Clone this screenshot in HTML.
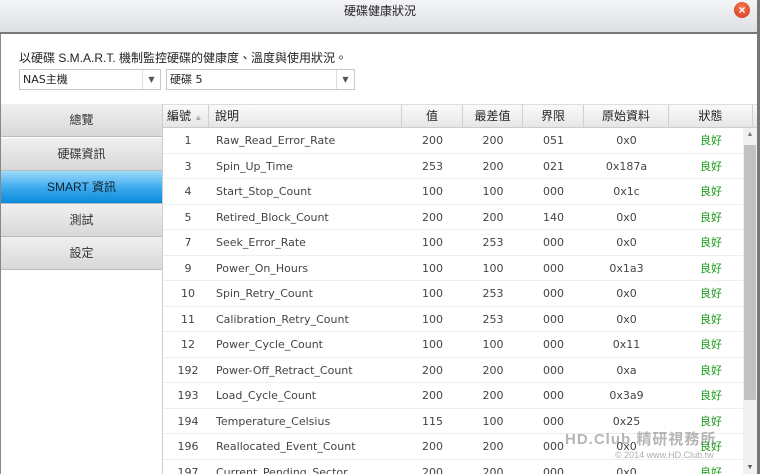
<!DOCTYPE html>
<html style="width:760px;height:474px;overflow:hidden"><head><meta charset="utf-8"><style>
*{margin:0;padding:0;box-sizing:border-box}
body{width:760px;height:474px;overflow:hidden;background:#fff;font-family:"Liberation Sans","Noto Sans CJK TC",sans-serif;font-size:12px;color:#333;position:relative}
.abs{position:absolute}
#title{left:0;top:0;width:760px;height:34px;background:linear-gradient(#f4f5f7,#dcdfe4);border-bottom:2px solid #777;text-align:center;line-height:22px;font-size:12px;color:#222}
#close{left:734px;top:2px;width:16px;height:16px;border-radius:50%;background:radial-gradient(circle at 50% 35%,#f47a50,#d6371d);color:#fff;font-size:12px;font-weight:bold;line-height:16px;text-align:center}
#rborder{left:757px;top:0;width:3px;height:474px;background:#777}
#lborder{left:0;top:34px;width:1px;height:440px;background:#888}
.sel{height:21px;border:1px solid #c8c8c8;background:#fff;font-family:"DejaVu Sans","Noto Sans CJK TC",sans-serif;font-size:11px;line-height:19px;padding-left:3px;color:#222}
.sel .arr{position:absolute;right:0;top:0;width:18px;height:19px;border-left:1px solid #ddd;text-align:center;font-size:8px;color:#555}
.tab{left:1px;width:161px;height:33px;background:linear-gradient(#f0f0f0,#d8d8d8);border-bottom:1px solid #bbb;text-align:center;line-height:33px;color:#333}
.tab.on{background:linear-gradient(#9edbfb,#38a8ec 55%,#0b8ad9);color:#123}
#hdr{left:163px;top:104px;width:594px;height:24px;background:linear-gradient(#fafafa,#e6e6e6);border-bottom:1px solid #ccc;border-top:1px solid #ddd}
.hc{top:0;height:23px;line-height:23px;text-align:center;border-right:1px solid #d0d0d0;color:#222}
.row{left:163px;width:580px;height:25.5px;border-bottom:1px solid #eee;font-family:"DejaVu Sans","Noto Sans CJK TC",sans-serif;font-size:11px;color:#444}
.row span{position:absolute;top:0;line-height:25px;text-align:center}
#vl{left:162px;top:104px;width:1px;height:370px;background:#ccc}
#sb{left:743px;top:128px;width:14px;height:346px;background:#f0f0f0}
#thumb{left:744px;top:145px;width:12px;height:255px;background:#c1c1c1;border-radius:1px}
</style></head><body>
<div id="title" class="abs">硬碟健康狀況</div>
<div id="close" class="abs">×</div>
<div id="lborder" class="abs"></div>
<div class="abs" style="left:19px;top:49px;font-size:12px;color:#222">以硬碟 S.M.A.R.T. 機制監控硬碟的健康度、溫度與使用狀況。</div>
<div class="abs sel" style="left:19px;top:69px;width:142px">NAS主機<span class="arr">▼</span></div>
<div class="abs sel" style="left:166px;top:69px;width:189px">硬碟 5<span class="arr">▼</span></div>
<div class="abs tab" style="top:104px">總覽</div>
<div class="abs tab" style="top:138px">硬碟資訊</div>
<div class="abs tab on" style="top:171px">SMART 資訊</div>
<div class="abs tab" style="top:204px">測試</div>
<div class="abs tab" style="top:237px">設定</div>
<div id="vl" class="abs"></div>
<div id="hdr" class="abs">
<div class="abs hc" style="left:0;width:46px;text-align:left;padding-left:4px">編號 <span style="font-size:8px;color:#aaa">▲</span></div>
<div class="abs hc" style="left:46px;width:193px;text-align:left;padding-left:6px">說明</div>
<div class="abs hc" style="left:239px;width:61px">值</div>
<div class="abs hc" style="left:300px;width:60px">最差值</div>
<div class="abs hc" style="left:360px;width:61px">界限</div>
<div class="abs hc" style="left:421px;width:85px">原始資料</div>
<div class="abs hc" style="left:506px;width:84px">狀態</div>
</div>
<div id="rows"></div>
<div id="sb" class="abs"><div style="text-align:center;font-size:7px;color:#777;margin-top:3px">▲</div><div style="position:absolute;bottom:3px;width:14px;text-align:center;font-size:7px;color:#555">▼</div></div>
<div id="thumb" class="abs"></div>
<div id="rborder" class="abs"></div>
<div class="abs" style="left:565px;top:428px;font-size:15px;color:rgba(120,120,120,.55);font-weight:bold;letter-spacing:1px">HD.Club 精研視務所</div>
<div class="abs" style="left:615px;top:450px;font-size:9px;color:rgba(120,120,120,.6)">© 2014 www.HD.Club.tw</div>
<script>
var d=[[1,"Raw_Read_Error_Rate",200,200,"051","0x0"],[3,"Spin_Up_Time",253,200,"021","0x187a"],[4,"Start_Stop_Count",100,100,"000","0x1c"],[5,"Retired_Block_Count",200,200,140,"0x0"],[7,"Seek_Error_Rate",100,253,"000","0x0"],[9,"Power_On_Hours",100,100,"000","0x1a3"],[10,"Spin_Retry_Count",100,253,"000","0x0"],[11,"Calibration_Retry_Count",100,253,"000","0x0"],[12,"Power_Cycle_Count",100,100,"000","0x11"],[192,"Power-Off_Retract_Count",200,200,"000","0xa"],[193,"Load_Cycle_Count",200,200,"000","0x3a9"],[194,"Temperature_Celsius",115,100,"000","0x25"],[196,"Reallocated_Event_Count",200,200,"000","0x0"],[197,"Current_Pending_Sector",200,200,"000","0x0"]];
var h="";d.forEach(function(r,i){var t=128+i*25.5;h+='<div class="abs row" style="top:'+t+'px"><span style="left:0;width:50px">'+r[0]+'</span><span style="left:53px;text-align:left">'+r[1]+'</span><span style="left:239px;width:61px">'+r[2]+'</span><span style="left:300px;width:60px">'+r[3]+'</span><span style="left:360px;width:61px">'+r[4]+'</span><span style="left:421px;width:85px">'+r[5]+'</span><span style="left:506px;width:84px;color:#1a9a1a">良好</span></div>';});
document.getElementById("rows").innerHTML=h;
</script>
</body></html>
